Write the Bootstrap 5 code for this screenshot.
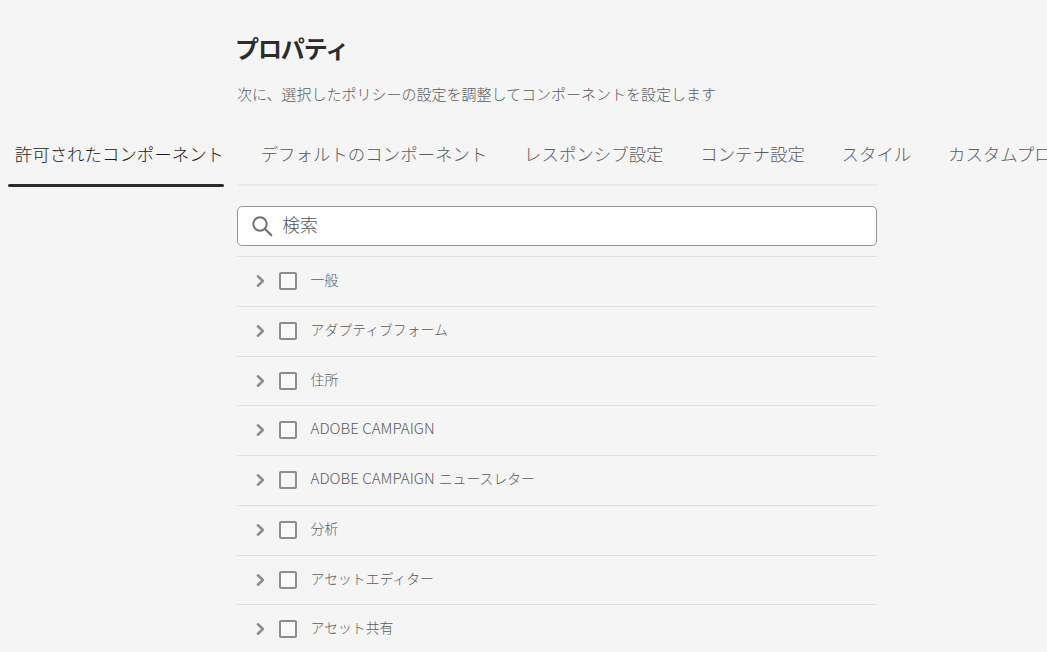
<!DOCTYPE html>
<html lang="ja">
<head>
<meta charset="utf-8">
<meta name="viewport" content="width=device-width, initial-scale=1">
<title>プロパティ</title>
<link href="https://cdn.jsdelivr.net/npm/bootstrap@5.3.0/dist/css/bootstrap.min.css" rel="stylesheet">
<style>
body{background:#f5f5f5;color:#5c5c5c;font-family:"Noto Sans CJK JP",sans-serif;font-weight:300;height:652px;overflow:hidden}
.panel{width:640px;margin-left:237px}
.page-title{font-size:24px;line-height:30px;font-weight:700;color:#2c2c2c;letter-spacing:-1.1px;padding-top:33px;margin:0 0 0 -2px}
.subtitle{font-size:15px;line-height:22px;margin:20px 0 0}
.tabs{margin-top:30px;height:51px;padding-left:8px;overflow:hidden}
.tabs .nav-link{color:#5c5c5c;font-size:17.45px;line-height:26px;padding:6px 0 0;margin-left:36.7px;white-space:nowrap;height:51px}
.tabs .nav-link.active{color:#1c1c1c;margin-left:0;width:216px;padding-left:6.8px;position:relative}
.tabs-wrap{position:relative}
.tabs-wrap::after{content:"";position:absolute;left:8px;width:216px;bottom:-1px;height:3px;border-radius:2px;background:#2c2c2c}
.rail{height:2px;background:#eaeaea;margin-top:-2px}
.search{height:40px;margin-top:20px;border:1px solid #959595;border-radius:5px;background:#fff;padding-left:14px}
.search input{font-size:17.8px;line-height:26px;font-weight:300;height:36px;padding:0 0 4px 9.2px;background:transparent}
.search input::placeholder{color:#555;opacity:1}
.groups{margin-top:10.2px}
.group-row{height:49.75px;border-top:1px solid #e1e1e1;padding-left:18px}
.group-row .form-check-input{width:18px;height:18px;margin:-1px 0 0 14px;border:2px solid #8e8e8e;border-radius:2px;background:#fafafa}
.group-row svg{margin-top:-1px}
.group-row label{font-size:13.85px;line-height:20px;margin:-5px 0 0 13.6px}
.latin{font-size:15.1px;line-height:1;margin-right:1px}
</style>
</head>
<body>
<header class="panel">
  <h1 class="page-title">プロパティ</h1>
  <p class="subtitle text-nowrap">次に、選択したポリシーの設定を調整してコンポーネントを設定します</p>
</header>
<div class="tabs-wrap">
<nav class="nav tabs flex-nowrap">
  <a class="nav-link active flex-shrink-0" href="#">許可されたコンポーネント</a>
  <a class="nav-link" href="#">デフォルトのコンポーネント</a>
  <a class="nav-link" href="#">レスポンシブ設定</a>
  <a class="nav-link" href="#">コンテナ設定</a>
  <a class="nav-link" href="#">スタイル</a>
  <a class="nav-link" href="#">カスタムプロパティ</a>
</nav>
</div>
<main class="panel">
  <div class="rail"></div>
  <div class="search d-flex align-items-center">
    <svg class="flex-shrink-0" width="21" height="21" viewBox="0 0 21 21" fill="none" stroke="#6e6e6e"><circle cx="8" cy="8" r="6.7" stroke-width="1.9"/><path d="M12.8 12.8l6.5 6.5" stroke-width="2.1" stroke-linecap="round"/></svg>
    <input class="form-control border-0 shadow-none" type="text" placeholder="検索" aria-label="検索">
  </div>
  <div class="groups" id="groups"></div>
</main>
<script src="https://cdn.jsdelivr.net/npm/bootstrap@5.3.0/dist/js/bootstrap.bundle.min.js"></script>
<script>
const names = ["一般","アダプティブフォーム","住所","ADOBE CAMPAIGN","ADOBE CAMPAIGN ニュースレター","分析","アセットエディター","アセット共有"];
document.getElementById("groups").innerHTML = names.map((n, i) => `
  <div class="group-row d-flex align-items-center">
    <svg class="flex-shrink-0" width="10" height="14" viewBox="0 0 10 14" fill="none" stroke="#8e8e8e" stroke-width="2.6" stroke-linecap="round" stroke-linejoin="round"><path d="M2.9 2.3L7.9 7l-5 4.7"/></svg>
    <input class="form-check-input flex-shrink-0" type="checkbox" id="g${i}">
    <label for="g${i}">${n.replace(/[A-Z][A-Z ]*[A-Z]/, '<span class="latin">$&</span>')}</label>
  </div>`).join("");
</script>
</body>
</html>
